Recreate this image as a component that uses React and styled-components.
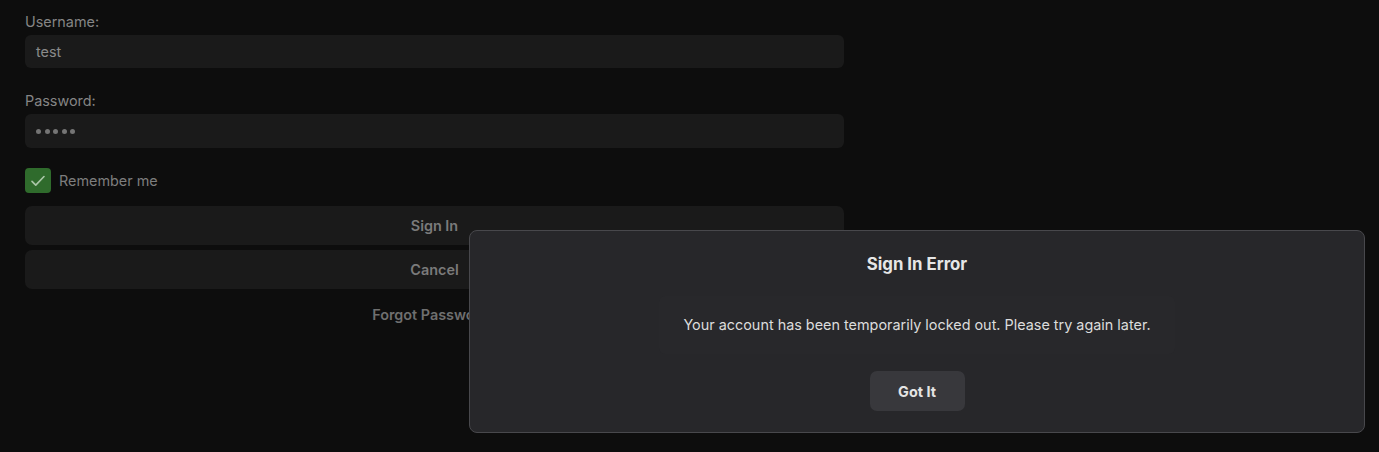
import React from "react";
import styled, { createGlobalStyle } from "styled-components";

const GlobalStyle = createGlobalStyle`
    html, body {
        margin: 0;
        padding: 0;
        background-color: #0d0d0d;
        font-family: Inter, "Liberation Sans", sans-serif;
    }
`;

const Page = styled.div`
    position: relative;
    width: 1379px;
    height: 452px;
    overflow: hidden;
    background-color: #0d0d0d;
`;

const Form = styled.div`
    width: 819px;
    padding: 13px 0 0 25px;
    display: flex;
    flex-direction: column;
`;

const Label = styled.label`
    font-size: 14.4px;
    line-height: 18px;
    color: #858585;
    margin-bottom: 4px;
`;

const Input = styled.div`
    height: ${(p) => p.h}px;
    display: flex;
    align-items: center;
    padding: 0 11px;
    background-color: #1a1a1a;
    border-radius: 6px;
    color: #8a8a8a;
    font-size: 14.4px;
    margin-bottom: ${(p) => p.mb}px;
`;

const Dots = styled.div`
    display: flex;
    gap: 3.5px;
`;

const Dot = styled.span`
    width: 5px;
    height: 5px;
    border-radius: 50%;
    background-color: #747474;
`;

const CheckRow = styled.div`
    display: flex;
    align-items: center;
    gap: 8px;
    margin-bottom: 13px;
`;

const CheckBox = styled.div`
    width: 26px;
    height: 25px;
    border-radius: 4px;
    background-color: #2f6b2c;
    display: flex;
    align-items: center;
    justify-content: center;
`;

const CheckLabel = styled.span`
    font-size: 14.4px;
    color: #7d7d7d;
`;

const Button = styled.div`
    height: 39px;
    border-radius: 7px;
    background-color: #1a1a1a;
    display: flex;
    align-items: center;
    justify-content: center;
    color: #7b7b7b;
    font-size: 14.4px;
    font-weight: 600;
    margin-bottom: 5px;
`;

const Link = styled.div`
    text-align: center;
    margin-top: 12px;
    line-height: 18px;
    color: #6f6f6f;
    font-size: 14.4px;
    font-weight: 600;
`;

const Dialog = styled.div`
    position: absolute;
    left: 469px;
    top: 230px;
    width: 894px;
    height: 201px;
    background-color: #27272a;
    border: 1px solid #48484c;
    border-radius: 8px;
    display: flex;
    flex-direction: column;
    align-items: center;
`;

const Title = styled.h2`
    margin: 23px 0 0;
    font-size: 16.8px;
    line-height: 20px;
    font-weight: 700;
    color: #e6e6e6;
`;

const Message = styled.div`
    margin-top: 22px;
    padding: 20px 24px;
    background-color: #28282b;
    border-radius: 6px;
    font-size: 14.4px;
    line-height: 18px;
    color: #dcdcdc;
`;

const GotIt = styled.div`
    margin-top: 17px;
    width: 95px;
    height: 40px;
    border-radius: 7px;
    background-color: #38383c;
    display: flex;
    align-items: center;
    justify-content: center;
    color: #e4e4e4;
    font-size: 14.4px;
    font-weight: 700;
`;

const App = () => {
    return (
        <Page>
            <GlobalStyle />
            <Form>
                <Label>Username:</Label>
                <Input h={33} mb={24}>test</Input>
                <Label>Password:</Label>
                <Input h={34} mb={20}>
                    <Dots>
                        {[0, 1, 2, 3, 4].map((i) => <Dot key={i} />)}
                    </Dots>
                </Input>
                <CheckRow>
                    <CheckBox>
                        <svg width="18" height="18" viewBox="0 0 24 24" fill="none" stroke="#a9c6a7" strokeWidth="2.2" strokeLinecap="round" strokeLinejoin="round">
                            <path d="M4 12.5l5 5L20 6" />
                        </svg>
                    </CheckBox>
                    <CheckLabel>Remember me</CheckLabel>
                </CheckRow>
                <Button>Sign In</Button>
                <Button>Cancel</Button>
                <Link>Forgot Password?</Link>
            </Form>
            <Dialog>
                <Title>Sign In Error</Title>
                <Message>Your account has been temporarily locked out. Please try again later.</Message>
                <GotIt>Got It</GotIt>
            </Dialog>
        </Page>
    );
};

export default App;
